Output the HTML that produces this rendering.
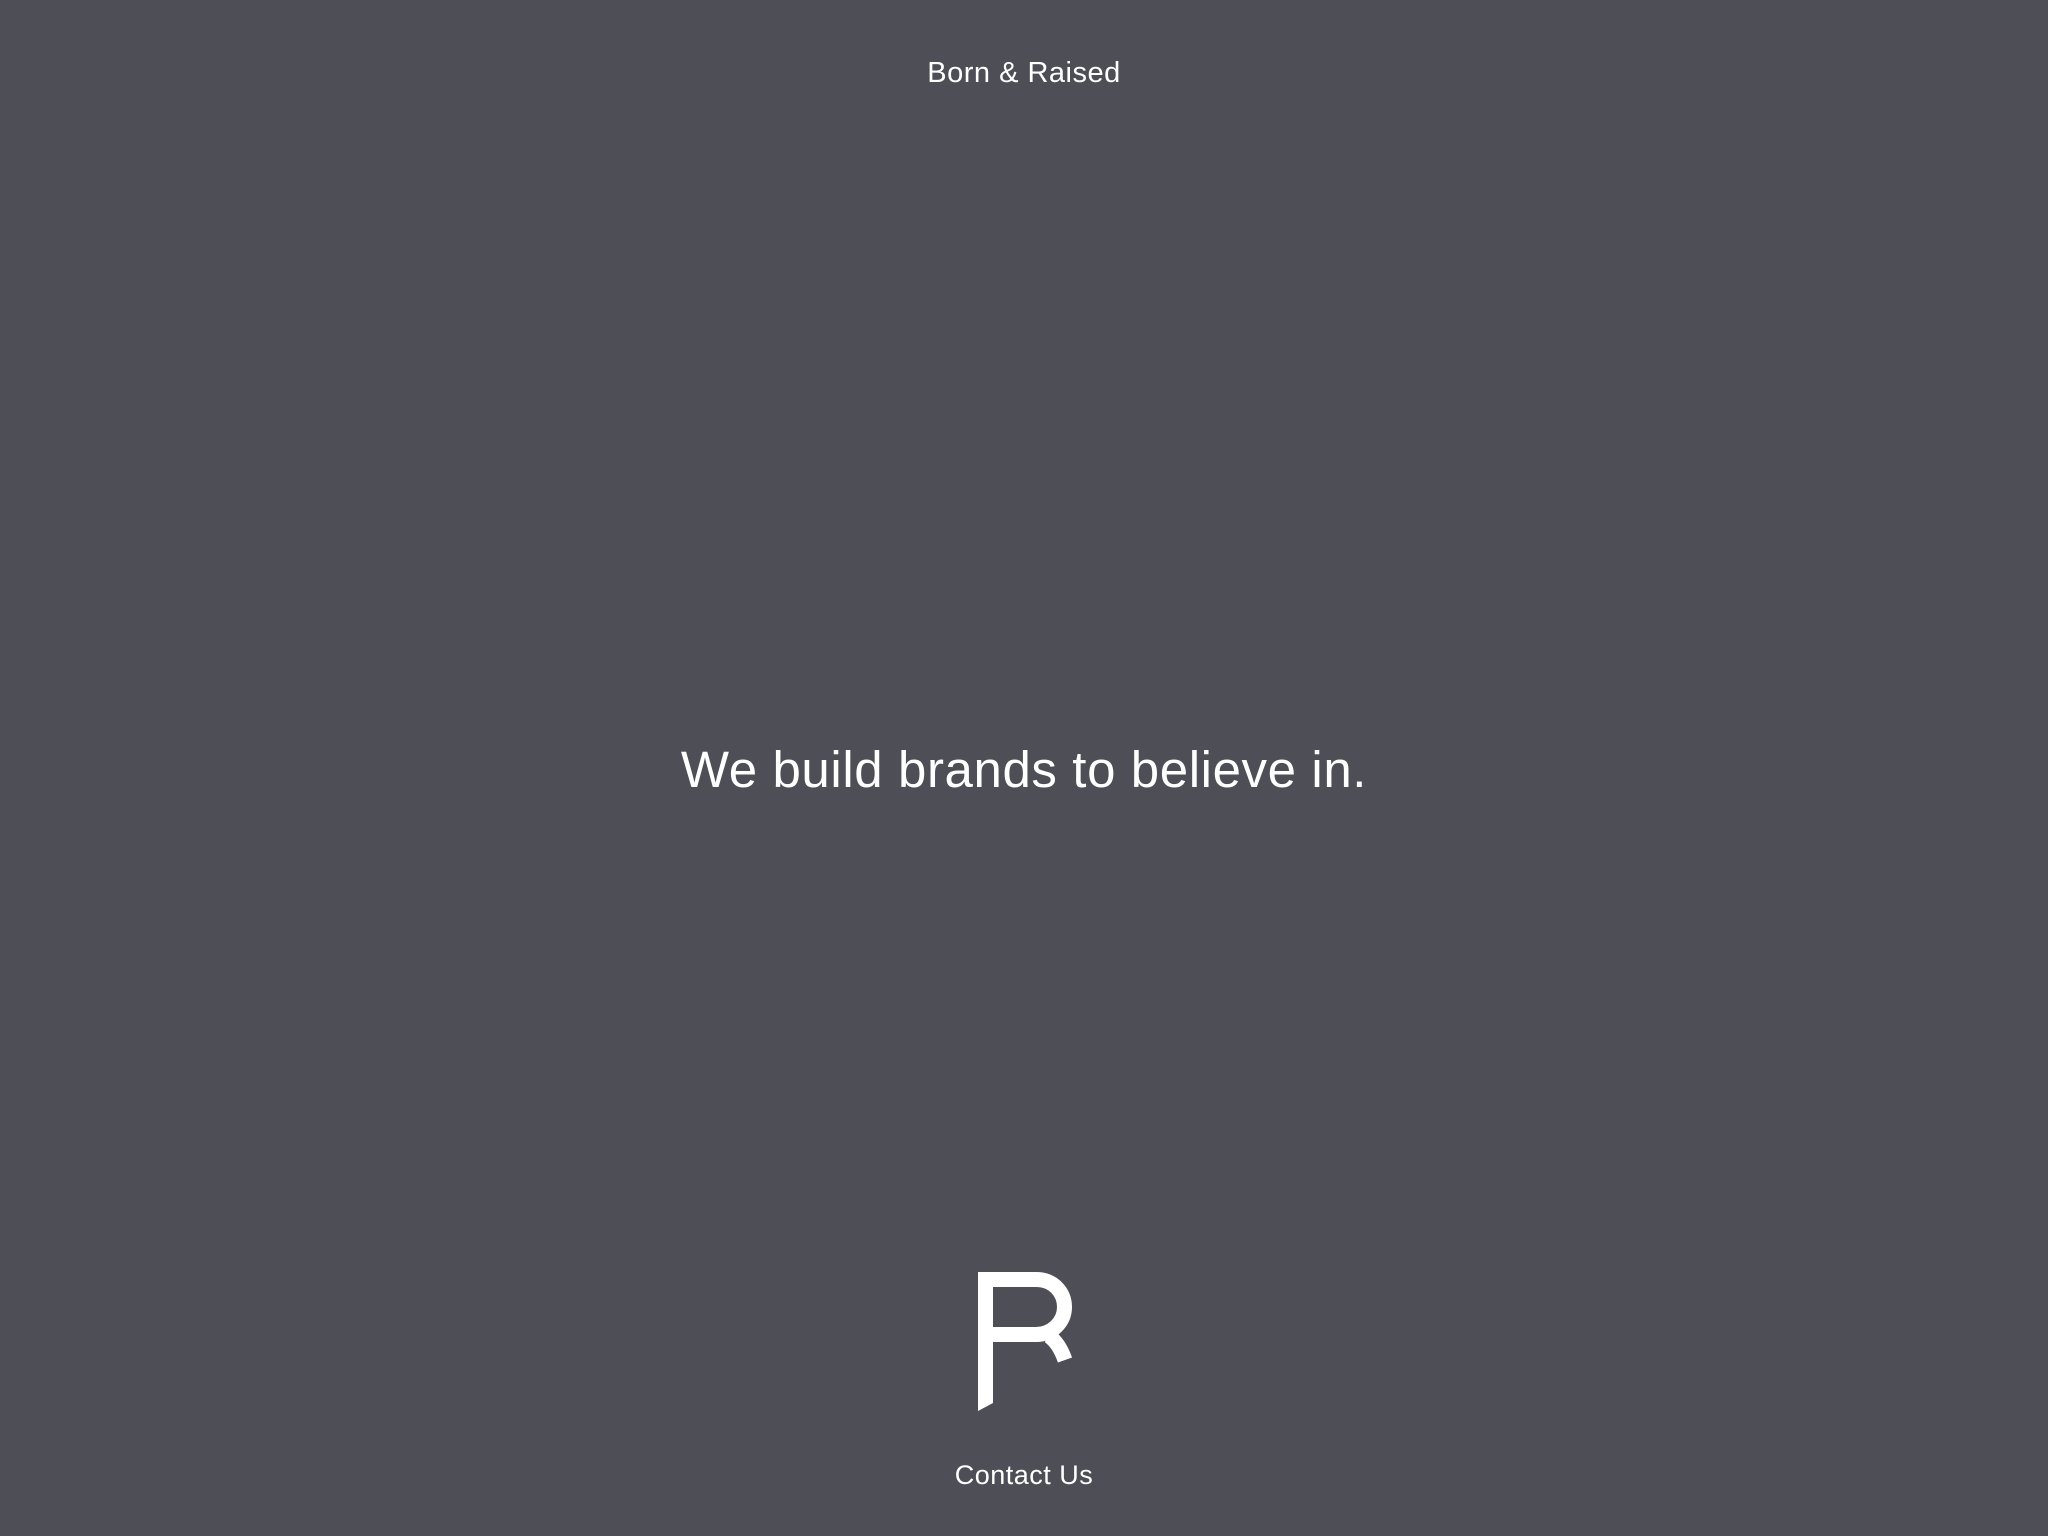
<!DOCTYPE html>
<html><head><meta charset="utf-8"><style>
html,body{margin:0;padding:0;width:2048px;height:1536px;background:#4e4e56;overflow:hidden}
.t{position:absolute;left:0;width:2048px;text-align:center;color:#fff;font-family:"Liberation Sans",sans-serif;white-space:nowrap}
</style></head><body>
<div class="t" style="top:53px;font-size:29px;line-height:40px;letter-spacing:0.5px">Born &amp; Raised</div>
<div class="t" style="top:738px;font-size:51px;line-height:64px;letter-spacing:0.6px">We build brands to believe in.</div>
<svg style="position:absolute;left:940px;top:1240px" width="180" height="200" viewBox="0 0 180 200">
<polygon points="38,32 53,32 53,163 38,171" fill="#fff"/>
<path d="M45,39.5 H96 C114,39.5 124.5,53 124.5,67 C124.5,82 112,94.5 96,94.5 H45" fill="none" stroke="#fff" stroke-width="15"/>
<path d="M109,96 Q119,103 125,120" fill="none" stroke="#fff" stroke-width="15"/>
</svg>
<div class="t" style="top:1457px;font-size:27px;line-height:36px;letter-spacing:0.5px">Contact Us</div>
</body></html>
